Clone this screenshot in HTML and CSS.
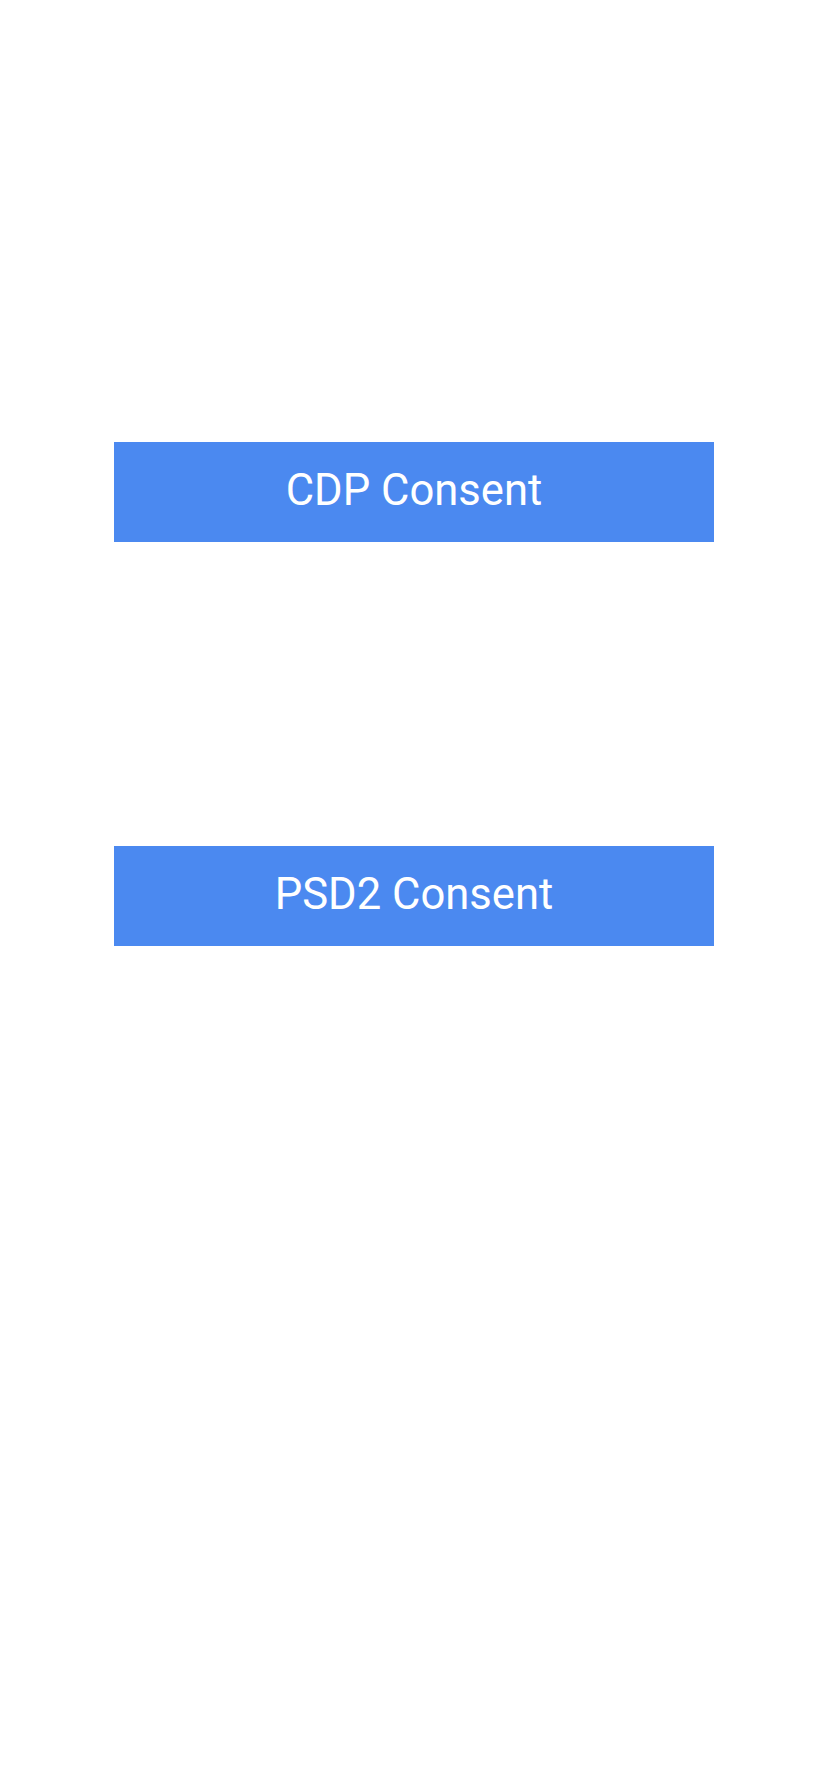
FILE: index.html
```html
<!DOCTYPE html>
<html lang="en">
<head>
<meta charset="utf-8">
<title>Consent</title>
<link rel="stylesheet" href="styles.css">
</head>
<body>
<main class="screen">
  <button class="consent-btn" type="button">CDP Consent</button>
  <button class="consent-btn" type="button">PSD2 Consent</button>
</main>
</body>
</html>
```

FILE: styles.css
```css
html, body {
  margin: 0;
  padding: 0;
  background: #ffffff;
}
.screen {
  box-sizing: border-box;
  width: 828px;
  height: 1792px;
  padding-top: 442px;
  display: flex;
  flex-direction: column;
  align-items: center;
  gap: 304px;
}
.consent-btn {
  box-sizing: border-box;
  width: 600px;
  height: 100px;
  border: 0;
  margin: 0;
  padding: 0 0 2px;
  background: #4b89f0;
  color: #ffffff;
  font-family: Roboto, "Noto Sans", sans-serif;
  font-size: 43.6px;
  font-weight: 400;
  line-height: 98px;
  text-align: center;
}
```
